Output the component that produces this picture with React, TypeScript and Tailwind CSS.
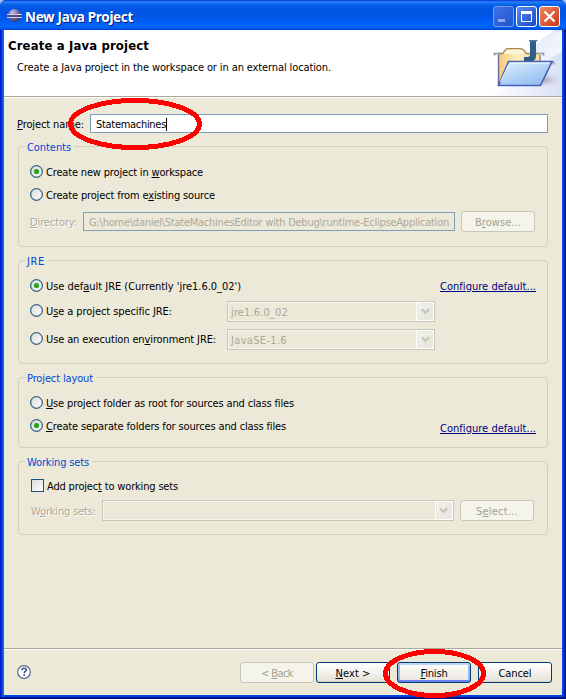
import { useLayoutEffect, useRef, useState } from "react";
import type { ReactNode } from "react";

/** One line of text, tracked so that it takes exactly `w` pixels. */
function Txt({ w, className = "", children }: { w: number; className?: string; children: ReactNode }) {
  const ref = useRef<HTMLSpanElement>(null);
  const [spacing, setSpacing] = useState(0);
  useLayoutEffect(() => {
    const el = ref.current;
    if (!el) return;
    const count = (el.textContent ?? "").length;
    setSpacing((s) => s + (w - el.getBoundingClientRect().width) / count);
  }, [w]);
  return (
    <span className={`block shrink-0 whitespace-pre ${className}`}>
      <span ref={ref} style={{ letterSpacing: spacing }}>
        {children}
      </span>
    </span>
  );
}

function Key({ children }: { children: string }) {
  return <span className="underline decoration-1 underline-offset-[1px]">{children}</span>;
}

function Radio({ on = false }: { on?: boolean }) {
  return (
    <span className="flex size-[13px] shrink-0 items-center justify-center rounded-full border border-[#21557f] bg-linear-to-br from-[#dcdcd7] to-white shadow-[inset_0_0_0_0.5px_#7e9cb5]">
      {on && <span className="size-[5px] rounded-full bg-[#27a527] shadow-[0_0_1px_#55c855]" />}
    </span>
  );
}

function Option({ on, w, children, className = "" }: { on?: boolean; w: number; children: ReactNode; className?: string }) {
  return (
    <label className={`flex items-start ${className}`}>
      <Radio on={on} />
      <Txt w={w} className="ml-[3px] mt-px">{children}</Txt>
    </label>
  );
}

function Group({ title, w, className, children }: { title: string; w: number; className: string; children: ReactNode }) {
  return (
    <section className={`relative w-[530px] rounded-[4px] border border-[#d0d0bf] ${className}`}>
      <h2 className="absolute -top-[6px] left-[6px] bg-[#ece9d8] pl-[2px] pr-[3px] text-[#0046d5]">
        <Txt w={w}>{title}</Txt>
      </h2>
      {children}
    </section>
  );
}

function Combo({ className, w = 0, value = "" }: { className: string; w?: number; value?: string }) {
  return (
    <div className={`flex h-[21px] shrink-0 border border-[#c9c7ba] shadow-[inset_0_0_0_1px_#f5f4ea] ${className}`}>
      <div className="flex-1 pl-[3px] pt-[4px] text-[#aca899]">{value && <Txt w={w}>{value}</Txt>}</div>
      <div className="w-[18px] bg-white p-px">
        <div className="flex h-full items-center justify-center rounded-[2px] border border-[#e8e8df] bg-linear-to-br from-[#f3f3ee] to-[#e5e4da]">
          <svg width="9" height="7" viewBox="0 0 9 7" fill="none" stroke="#c9c7ba" strokeWidth="2.3">
            <path d="M.8 1.2 4.5 4.9 8.2 1.2" />
          </svg>
        </div>
      </div>
    </div>
  );
}

function Button({ kind = "normal", w, className = "", children }: { kind?: "normal" | "off" | "main"; w: number; className?: string; children: ReactNode }) {
  const look = {
    normal: "border-[#003c74] bg-linear-to-b from-white via-[#f3f2ed] to-[#e4e0d5] text-black shadow-[inset_0_-1px_0_#d6d0c5]",
    off: "border-[#c9c7ba] bg-[#f5f4ea] text-[#a1a192]",
    main: "border-[#003c74] bg-linear-to-b from-white via-[#f3f2ed] to-[#e9e6dc] text-black shadow-[inset_0_2px_0_#bcd4f6,inset_0_-2px_0_#6982ee,inset_2px_0_0_#98b8ea,inset_-2px_0_0_#98b8ea]",
  }[kind];
  return (
    <button className={`flex h-[21px] w-[74px] shrink-0 justify-center rounded-[3px] border pt-[4px] ${look} ${className}`}>
      <Txt w={w}>{children}</Txt>
    </button>
  );
}

function Caption({ className, children }: { className: string; children: ReactNode }) {
  return (
    <button className={`flex size-[21px] items-center justify-center rounded-[3px] border ${className}`}>
      <svg width="19" height="19" viewBox="0 0 19 19" fill="none" stroke="currentColor">
        {children}
      </svg>
    </button>
  );
}

function EclipseIcon() {
  return (
    <svg className="ml-[3px] mt-[8px]" width="15" height="15" viewBox="0 0 15 15">
      <defs>
        <radialGradient id="ball" cx=".35" cy=".25" r=".85">
          <stop offset="0" stopColor="#c4bfe0" />
          <stop offset=".45" stopColor="#7a72ac" />
          <stop offset="1" stopColor="#2c2564" />
        </radialGradient>
      </defs>
      <circle cx="7.5" cy="7.5" r="6.5" fill="url(#ball)" />
      <path d="M0 6.500h15M0 9.500h15" stroke="#d5d1ea" strokeWidth="1" />
      <path d="M1 8h13" stroke="#453b80" strokeWidth="1.500" />
    </svg>
  );
}

function FolderBanner() {
  return (
    <svg width="72" height="66" viewBox="490 30 72 66">
      <defs>
        <linearGradient id="haze" x1="0" x2="1">
          <stop offset="0" stopColor="#fff" />
          <stop offset="1" stopColor="#dae1f6" />
        </linearGradient>
        <linearGradient id="haze2" x1="0" x2="1" y1="0" y2="1">
          <stop offset="0" stopColor="#e6ebfa" />
          <stop offset="1" stopColor="#f8f9fe" />
        </linearGradient>
        <linearGradient id="front" x1="0" x2=".7" y1="0" y2="1">
          <stop offset="0" stopColor="#e4f1ff" />
          <stop offset="1" stopColor="#8fbcf0" />
        </linearGradient>
        <linearGradient id="back" x1="0" x2="1">
          <stop offset="0" stopColor="#f3ca75" />
          <stop offset=".45" stopColor="#fdecc0" />
          <stop offset="1" stopColor="#f6dda0" />
        </linearGradient>
        <radialGradient id="shade">
          <stop offset="0" stopColor="#8f8a9c" stopOpacity=".65" />
          <stop offset="1" stopColor="#c9c4d4" stopOpacity="0" />
        </radialGradient>
      </defs>
      <path d="M490 96h72V30h-8c-8 10-22 14-28 30-4 14-14 27-36 36z" fill="url(#haze)" />
      <path d="M562 31c-13 2-22 7-27 16v26c10-11 17-17 27-21z" fill="url(#haze2)" />
      <ellipse cx="545" cy="80" rx="16" ry="8" fill="url(#shade)" />
      <path d="M498.500 85V53.500h39.500l2.500 2V75z" fill="url(#back)" />
      <path d="M503 53.500l1-2 3-2.800h14.500l3 2 1.500 2.800z" fill="#fdf3d8" />
      <path d="M498.500 53.500h4.500l1-2 3-2.800h14.500l3 2 1.500 2.800h12" fill="none" stroke="#a98a4c" strokeWidth="1.300" />
      <path d="M498.500 54v31" stroke="#6c6a96" strokeWidth="1.400" />
      <path d="M540 55v7" stroke="#7f89a5" strokeWidth="1.400" />
      <path d="M494.500 55.500v-2h7.500M536 53.500h7.500v2M548 62h5.500v2.500" fill="none" stroke="#9b9993" strokeWidth="1.700" />
      <path d="M530 40.500h6V56c0 3.500-2 5.500-5 5.500h-7V57h4.500l1.500-1.500z" fill="#2f5f88" />
      <path d="M529 40.700h8.500" stroke="#54799b" strokeWidth="1.400" />
      <path d="M508.500 61.500h43.500L540.500 85.500h-42z" fill="url(#front)" stroke="#4361b2" strokeWidth="1.600" />
      <path d="M510 63h39.500M508.500 64.500L500.500 82" fill="none" stroke="#f3f9ff" />
    </svg>
  );
}

function HelpIcon() {
  return (
    <svg className="mt-[3px]" width="14" height="14" viewBox="0 0 14 14" fill="none">
      <circle cx="7" cy="7" r="6.300" fill="#fff" stroke="#56698f" strokeWidth="1.200" />
      <path d="M4.900 5.300c0-1.300.8-2.100 2.200-2.100 1.300 0 2.200.7 2.200 1.800 0 1.500-2.100 1.500-2.100 3.200M7.200 9.300v1.700" stroke="#3f527e" strokeWidth="1.600" />
    </svg>
  );
}

export default function App() {
  return (
    <div className="relative h-[699px] w-[566px] bg-[#a8bdee]">
      <div className="flex h-full flex-col overflow-hidden rounded-t-[6px] bg-[#0831d9] font-['DejaVu_Sans_Condensed','DejaVu_Sans',sans-serif] text-[11px] leading-[13px] text-black">
        <header className="flex h-[30px] shrink-0 items-start bg-[linear-gradient(#0831d9_0,#2a83f5_2px,#1573f4_3px,#0560ea_5px,#0055e4_9px,#0055e5_15px,#005cf2_21px,#0166ff_26px,#005bf0_28px,#0043cf_30px)] pl-[4px] pr-[6px]">
          <EclipseIcon />
          <Txt w={108} className="ml-[3px] mt-[8px] font-['Noto_Sans','Open_Sans',sans-serif] text-[13.500px] font-bold leading-[18px] text-white [text-shadow:1px_1px_0_#0a1883]">
            New Java Project
          </Txt>
          <div className="ml-auto mt-[6px] flex gap-[2px]">
            <Caption className="border-[#7a9ae6] bg-linear-to-br from-[#3f72e3] to-[#2253cd] text-[#8fa9e8]">
              <path d="M4 13.500h7" strokeWidth="3" />
            </Caption>
            <Caption className="border-white bg-linear-to-br from-[#5a8bf1] to-[#1745c8] text-white">
              <path d="M4.500 4.500h10v10h-10z" />
              <path d="M4 5.500h11" strokeWidth="3" />
            </Caption>
            <Caption className="border-white bg-linear-to-br from-[#f0875e] to-[#c93310] text-white">
              <path d="M4.500 4.500l10 10M14.500 4.500l-10 10" strokeWidth="2.200" />
            </Caption>
          </div>
        </header>

        <div className="flex-1 bg-[linear-gradient(to_right,#0019cf_0_1px,#0831d9_1px_2px,#0855dd_2px_3px,#166aee_3px_4px,#0855dd_4px_562px,#0046e0_562px_564px,#001da0_564px_565px,#00138c_565px)]">
          <div className="h-full border-b-2 border-[#00138c]">
            <div className="mx-[4px] flex h-full flex-col border-b-2 border-[#0046e0] bg-[#ece9d8]">
              <div className="flex h-[66px] shrink-0 justify-between bg-white pl-[4px]">
                <div>
                  <Txt w={141} className="mt-[7px] text-[13px] font-bold leading-[17px]">Create a Java project</Txt>
                  <Txt w={314} className="ml-[9px] mt-[7px]">Create a Java project in the workspace or in an external location.</Txt>
                </div>
                <FolderBanner />
              </div>
              <div className="h-[2px] shrink-0 border-b border-t border-b-white border-t-[#aca899]" />

              <main className="flex flex-1 flex-col pl-[14px] pt-[16px]">
                <div className="flex h-[19px] items-start">
                  <Txt w={67} className="-ml-px mt-[4px]"><Key>P</Key>roject name:</Txt>
                  <div className="ml-[6px] flex h-[19px] w-[458px] border border-[#7f9db9] bg-white pl-[5px] pt-[3px]">
                    <Txt w={70}>Statemachines</Txt>
                    <span className="h-[13px] w-px bg-black" />
                  </div>
                </div>

                <Group title="Contents" w={44} className="mt-[13px] h-[101px] pl-[11px] pt-[18px]">
                  <Option on w={157}>Create new project in <Key>w</Key>orkspace</Option>
                  <Option w={169} className="mt-[9px]">Create project from e<Key>x</Key>isting source</Option>
                  <div className="mt-[9px] flex h-[21px] items-start">
                    <Txt w={47} className="mt-[5px] text-[#aca899] [text-shadow:1px_1px_0_#fff]"><Key>D</Key>irectory:</Txt>
                    <div className="ml-[6px] mt-px h-[19px] w-[372px] border border-[#7f9db9] pl-[5px] pt-[3px] text-[#aca899]">
                      <Txt w={360}>G:\home\daniel\StateMachinesEditor with Debug\runtime-EclipseApplication</Txt>
                    </div>
                    <Button kind="off" w={46} className="ml-[6px]">B<Key>r</Key>owse...</Button>
                  </div>
                </Group>

                <Group title="JRE" w={18} className="mt-[13px] h-[104px] pl-[11px] pt-[18px]">
                  <div className="flex h-[22px] items-start justify-between pr-[11px]">
                    <Option on w={195}>Use def<Key>a</Key>ult JRE (Currently 'jre1.6.0_02')</Option>
                    <Txt w={96} className="mt-px text-[#000080] underline underline-offset-[1px]">Configure default...</Txt>
                  </div>
                  <div className="flex items-start">
                    <Option w={126} className="mt-[3px] w-[197px]">U<Key>s</Key>e a project specific JRE:</Option>
                    <Combo className="w-[208px]" w={57} value="jre1.6.0_02" />
                  </div>
                  <div className="mt-[7px] flex items-start">
                    <Option w={170} className="mt-[3px] w-[197px]">Use an execution en<Key>v</Key>ironment JRE:</Option>
                    <Combo className="w-[208px]" w={56} value="JavaSE-1.6" />
                  </div>
                </Group>

                <Group title="Project layout" w={66} className="mt-[13px] h-[71px] pl-[11px] pt-[18px]">
                  <Option w={248}><Key>U</Key>se project folder as root for sources and class files</Option>
                  <div className="mt-[9px] flex items-start justify-between pr-[11px]">
                    <Option on w={240}><Key>C</Key>reate separate folders for sources and class files</Option>
                    <Txt w={96} className="mt-[3px] text-[#000080] underline underline-offset-[1px]">Configure default...</Txt>
                  </div>
                </Group>

                <Group title="Working sets" w={62} className="mt-[13px] h-[74px] pl-[12px] pt-[17px]">
                  <label className="flex h-[21px] items-start">
                    <span className="size-[13px] shrink-0 border border-[#1d5180] bg-linear-to-br from-[#dcdcd7] to-white" />
                    <Txt w={131} className="ml-[3px] mt-px">Add projec<Key>t</Key> to working sets</Txt>
                  </label>
                  <div className="flex items-start">
                    <Txt w={65} className="mt-[5px] text-[#aca899] [text-shadow:1px_1px_0_#fff]">W<Key>o</Key>rking sets:</Txt>
                    <Combo className="ml-[6px] w-[352px]" />
                    <Button kind="off" w={42} className="ml-[6px]">S<Key>e</Key>lect...</Button>
                  </div>
                </Group>
              </main>

              <div className="h-[2px] shrink-0 border-b border-t border-b-white border-t-[#aca899]" />
              <footer className="flex h-[45px] shrink-0 items-start pl-[13px] pt-[12px]">
                <HelpIcon />
                <Button kind="off" w={32} className="ml-[209px]">&lt; <Key>B</Key>ack</Button>
                <Button w={35} className="ml-[2px]"><Key>N</Key>ext &gt;</Button>
                <Button kind="main" w={27} className="ml-[7px]"><Key>F</Key>inish</Button>
                <Button w={33} className="ml-[7px]">Cancel</Button>
              </footer>
            </div>
          </div>
        </div>
      </div>

      {/* Hand-drawn markers over the name field and the Finish button */}
      <svg className="pointer-events-none absolute inset-0" width="566" height="699" fill="none" stroke="#f00" strokeWidth="5" shapeRendering="crispEdges">
        <ellipse cx="135" cy="124" rx="64.500" ry="23.500" />
        <ellipse cx="434.500" cy="673.500" rx="49" ry="22" />
      </svg>
    </div>
  );
}
